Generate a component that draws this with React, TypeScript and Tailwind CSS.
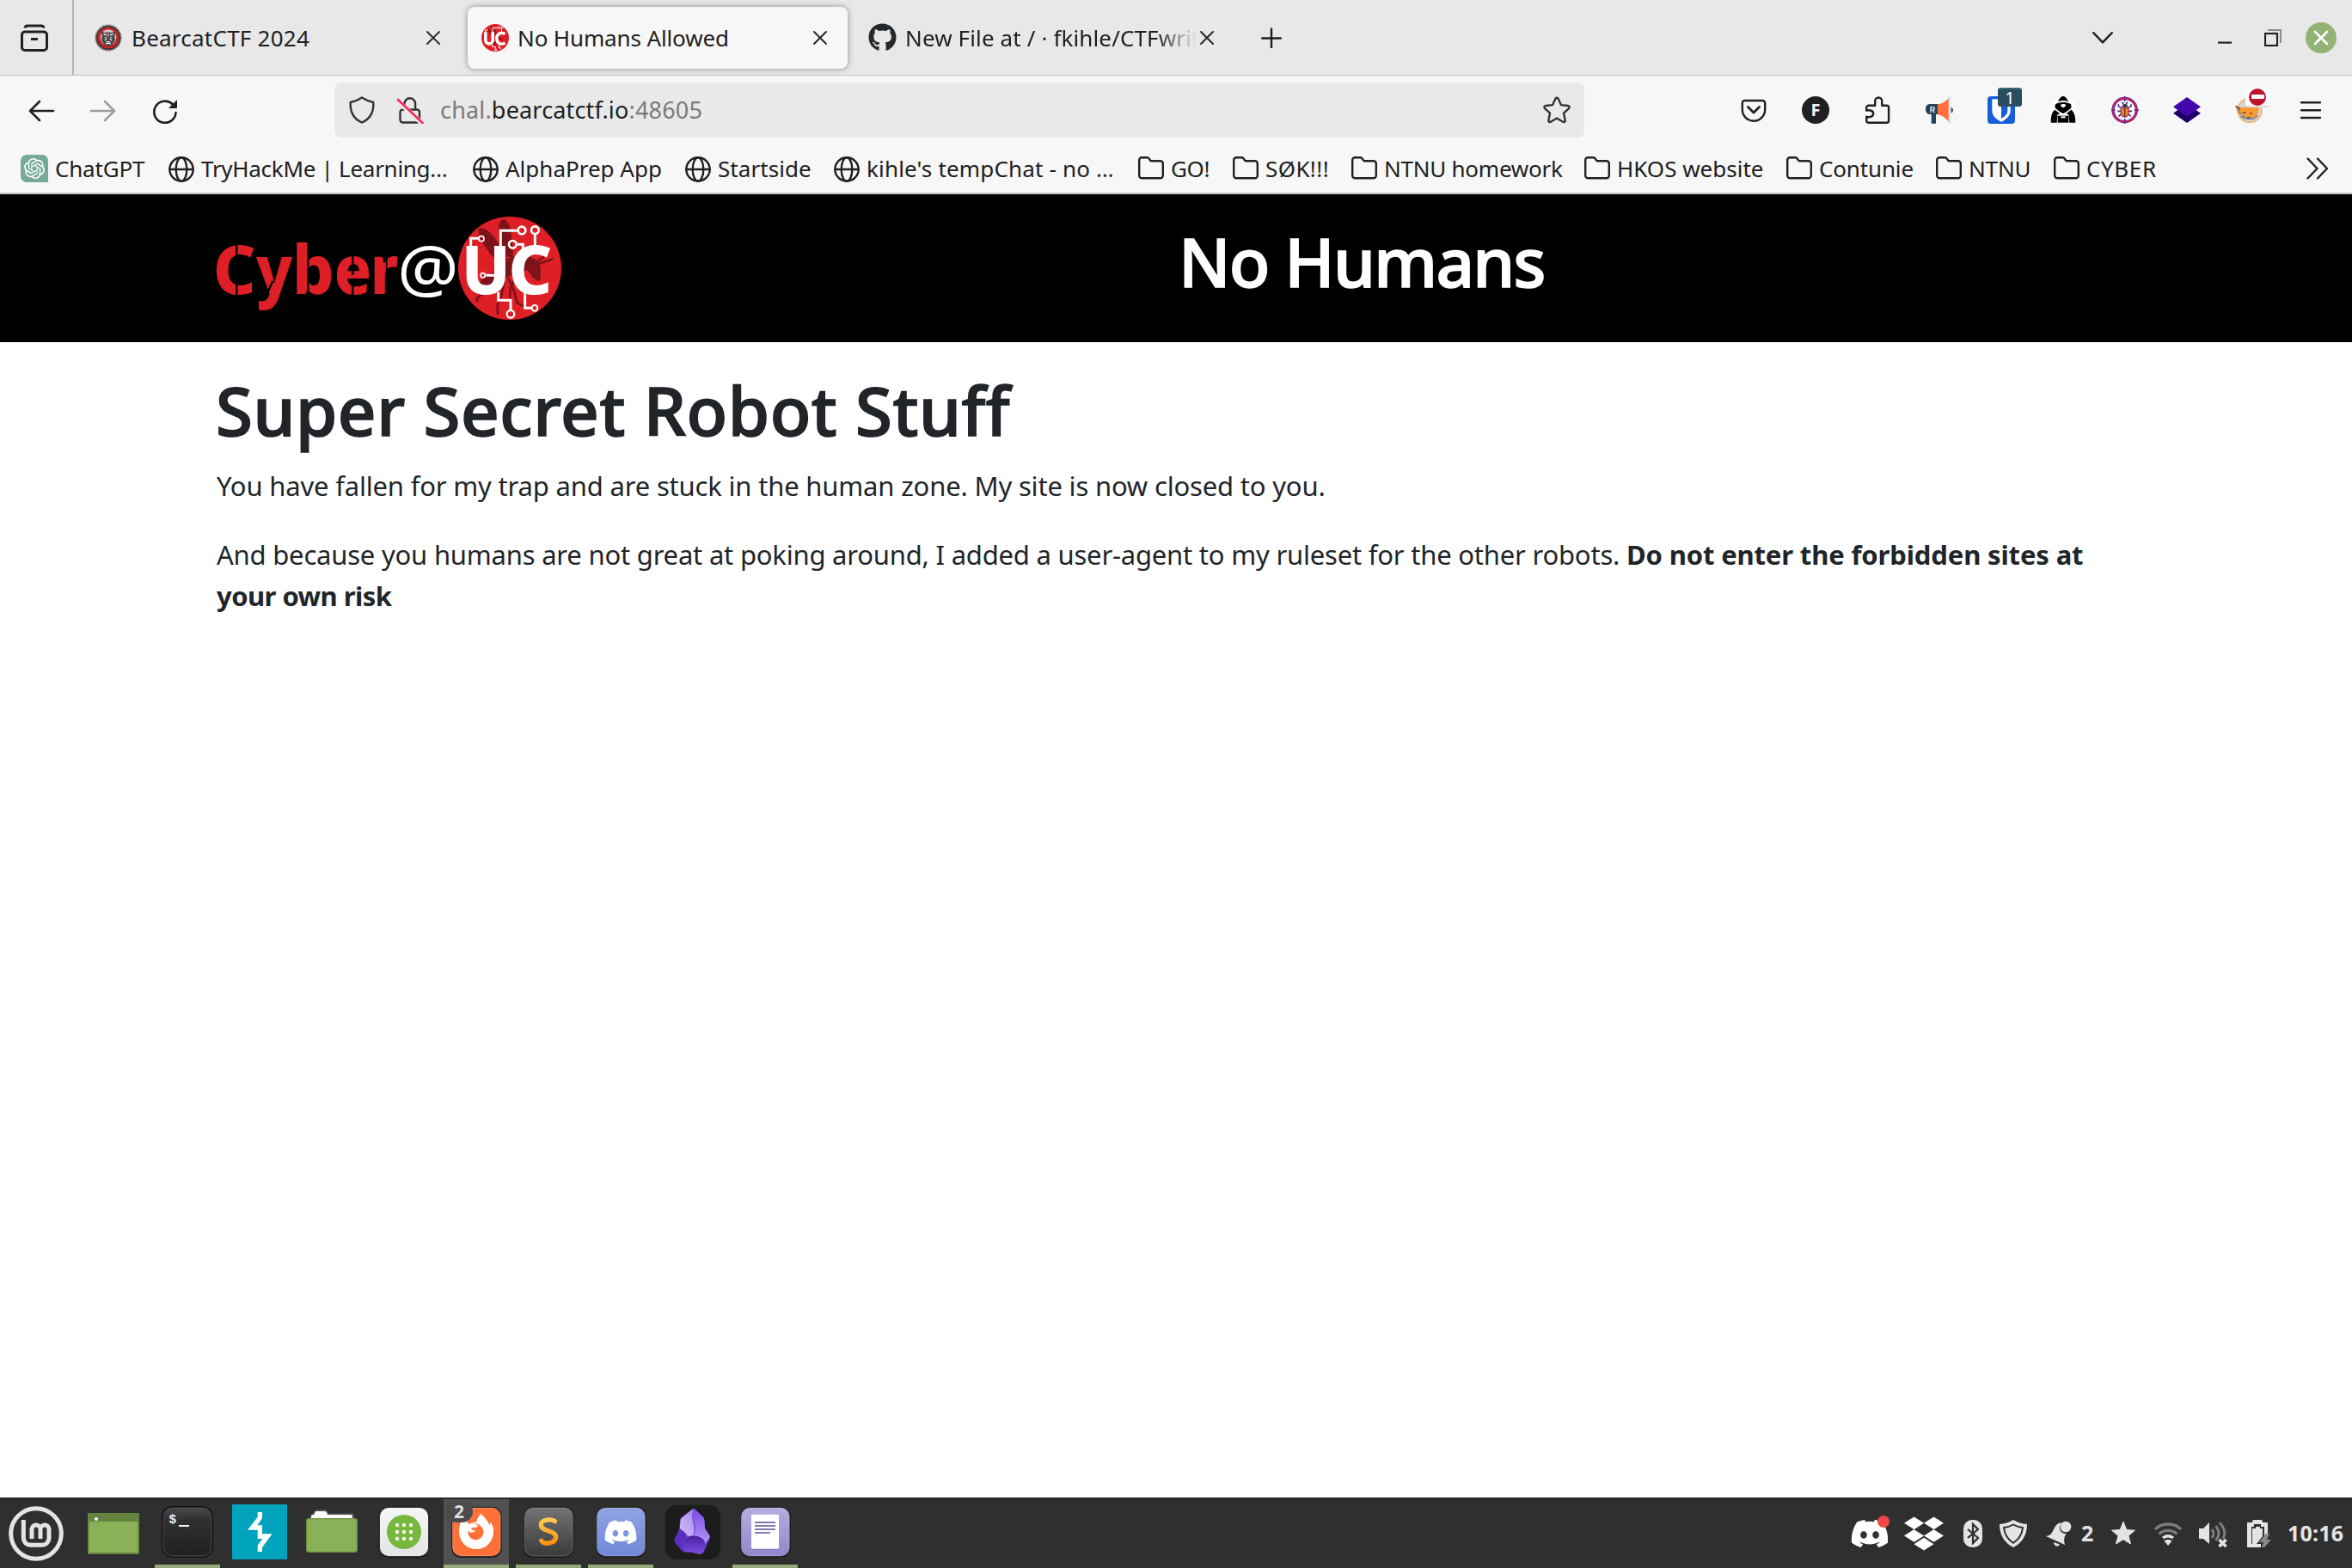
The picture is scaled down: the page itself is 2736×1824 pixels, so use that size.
import React, { ReactNode } from 'react';
import { FaDiscord, FaDropbox, FaGithub } from 'react-icons/fa';
import { SiOpenai } from 'react-icons/si';

/* ---------- browser chrome icons ---------- */

const Line = ({ children, className = 'size-8' }: { children: ReactNode; className?: string }) => (
  <svg viewBox="0 0 32 32" className={`shrink-0 ${className}`} fill="none" stroke="currentColor" strokeWidth="2.4" strokeLinecap="round" strokeLinejoin="round">
    {children}
  </svg>
);

const CloseIcon = () => (
  <svg viewBox="0 0 16 16" className="size-4 shrink-0" stroke="#222" strokeWidth="1.8" strokeLinecap="round">
    <path d="M1 1l14 14M15 1L1 15" />
  </svg>
);

const Globe = () => (
  <Line>
    <circle cx="16" cy="17" r="13.7" />
    <ellipse cx="16" cy="17" rx="6.3" ry="13.7" />
    <path d="M2.5 17h27" />
  </Line>
);

const Folder = () => (
  <Line>
    <path d="M2.2 6.2a3 3 0 0 1 3-3h6.2c1 0 1.7.4 2.2 1.2l1.6 2.3c.3.4.7.6 1.2.6h10.4a3 3 0 0 1 3 3v13.9a3 3 0 0 1-3 3H5.2a3 3 0 0 1-3-3z" />
  </Line>
);

const ChatGpt = () => (
  <span className="flex size-8 shrink-0 items-center justify-center rounded-[7px] rounded-br-none bg-[#74a99b]">
    <SiOpenai className="size-6 text-white" />
  </span>
);

const Bearcat = () => (
  <svg viewBox="0 0 32 32" className="size-8 shrink-0">
    <circle cx="16" cy="16" r="14.6" fill="#3a3536" stroke="#6f6a6b" strokeWidth="2" strokeDasharray="1.6 1.2" />
    <circle cx="16" cy="16" r="11.6" fill="#b5262b" stroke="#e01f26" strokeWidth="1.4" />
    <circle cx="16" cy="15.6" r="9.4" fill="#d9c3c4" />
    <path d="M8 8.5l4 1.6 4-.8 4 .8 4-1.6-.6 6 .6 4-3 5-5 3-5-3-3-5 .6-4z" fill="#4a4748" />
    <path d="M10.5 11.5l3.5 1.5M21.5 11.5L18 13M12 19l2-2M20 19l-2-2M13 22.5h6M14 20.6h4" stroke="#e8e5e5" strokeWidth="1.4" />
    <path d="M11.5 15.6h2.6M17.9 15.6h2.6M16 10v5" stroke="#b9b5b6" strokeWidth="1.2" />
  </svg>
);

const UcFavicon = () => (
  <svg viewBox="0 0 32 32" className="size-8 shrink-0">
    <circle cx="16" cy="16" r="16" fill="#df1f26" />
    <path d="M12 3l6 10 6 6M14 24l5-6M8 6l6 9" stroke="#8a151b" strokeWidth="2.4" />
    <g fill="none" stroke="#fff">
      <path d="M4.8 9.3v9.5a4.2 4.2 0 0 0 8.4 0V9.3" strokeWidth="3.6" />
      <path d="M27.5 11.6c-5.5-3-9.7.2-9.7 5.2s4.2 8 9.7 5.2" strokeWidth="3.4" />
      <path d="M4.5 9V7h3M13 9V4.5h5M23.5 10V5M12.5 24v2.5h4v3M20.5 24v4h3" strokeWidth="1" />
      <circle cx="20" cy="4.3" r="1.2" strokeWidth=".9" />
      <circle cx="23.7" cy="4" r="1.2" strokeWidth=".9" />
      <circle cx="16.5" cy="30" r="1.1" strokeWidth=".9" />
    </g>
  </svg>
);

/* ---------- tab strip ---------- */

const TabStrip = () => (
  <div className="flex h-[88px] items-center border-b border-[#c2c2c2] bg-[#e8e8e8] text-[26px]">
    <div className="flex h-[87px] w-[86px] shrink-0 items-center border-r-2 border-[#b5b5b5] pl-6">
      <svg viewBox="0 0 32 32" className="size-8" fill="none" stroke="#202022" strokeWidth="3">
        <rect x="1.5" y="9" width="29" height="21.5" rx="3.5" />
        <path d="M5 4.5C5.3 2.700 6.3 2 8 2h16c1.700 0 2.700.7 3 2.500" />
        <path d="M12 17.5h8" />
      </svg>
    </div>
    <div className="flex h-[72px] w-[458px] items-center pl-6 pr-8">
      <Bearcat />
      <span className="ml-[11px] grow whitespace-nowrap pt-px tracking-[0.24px]">BearcatCTF 2024</span>
      <CloseIcon />
    </div>
    <div className="flex h-[72px] w-[442px] items-center rounded-lg bg-[#f7f7f7] pl-4 pr-6 shadow-[0_0_7px_rgba(0,0,0,0.4)]">
      <UcFavicon />
      <span className="ml-2.5 grow whitespace-nowrap pt-px tracking-[-0.13px]">No Humans Allowed</span>
      <CloseIcon />
    </div>
    <div className="flex h-[72px] w-[450px] items-center pl-6 pr-6">
      <FaGithub className="size-[33px] shrink-0 text-[#24292e]" />
      <span className="ml-2.5 mr-1 w-0 grow overflow-hidden whitespace-nowrap pt-px tracking-[0.13px] [mask-image:linear-gradient(to_right,#000_86%,transparent_100%)]">
        New File at / · fkihle/CTFwrit
      </span>
      <CloseIcon />
    </div>
    <svg viewBox="0 0 24 24" className="ml-[31px] size-6" stroke="#202022" strokeWidth="2.4" strokeLinecap="round">
      <path d="M12 1.5v22M1 12.500h22" />
    </svg>
    <svg viewBox="0 0 24 14" className="ml-auto h-3.5 w-6" fill="none" stroke="#202022" strokeWidth="2.4" strokeLinecap="round" strokeLinejoin="round">
      <path d="M1.200 1.200L12 12.400 22.800 1.200" />
    </svg>
    <svg viewBox="0 0 16 16" className="ml-[122px] size-4">
      <path d="M0 12.500h16v2.200H0z" fill="#222" />
    </svg>
    <svg viewBox="0 0 20 20" className="ml-[38px] size-5" fill="none">
      <path d="M4 1h15v15" stroke="#8b8b8b" strokeWidth="2" />
      <rect x="1" y="5" width="14" height="14" stroke="#222" strokeWidth="2.2" />
    </svg>
    <svg viewBox="0 0 36 36" className="ml-7 mr-[18px] size-9">
      <circle cx="18" cy="18" r="18" fill="#93b374" />
      <path d="M11 11l14 14M25 11L11 25" stroke="#fff" strokeWidth="2.6" strokeLinecap="round" />
    </svg>
  </div>
);

/* ---------- navigation bar ---------- */

const Cell = ({ children }: { children: ReactNode }) => (
  <div className="relative flex h-20 w-[72px] shrink-0 items-center justify-center">{children}</div>
);

const NavBar = () => (
  <div className="flex h-20 items-center bg-[#f7f7f7] pl-3 pr-3 text-[#202022]">
    <Cell>
      <Line><path d="M30 17H3M14 6L3 17l11 11" strokeWidth="2.6" /></Line>
    </Cell>
    <Cell>
      <Line className="size-8 text-[#9c9c9c]"><path d="M2 17h27M18 6l11 11-11 11" strokeWidth="2.6" /></Line>
    </Cell>
    <Cell>
      <Line>
        <path d="M28.500 19A12.600 12.600 0 1 1 24.500 9" strokeWidth="2.6" />
        <path d="M29.500 5.200v8.300h-8.300z" fill="currentColor" strokeWidth="1" />
      </Line>
    </Cell>
    <div className="ml-[161px] flex h-16 w-[1454px] shrink-0 items-center rounded-lg bg-[#e9e9e9] pl-4 pr-4 text-[27px] text-[#333]">
      <Line>
        <path d="M16 1.500c4.500 3 8.600 4.500 13.300 5.500.6 11-4 19.500-13.300 23.500C6.700 26.500 2.100 18 2.700 7 7.400 6 11.500 4.500 16 1.500z" />
      </Line>
      <Line className="ml-6 size-8">
        <rect x="4.5" y="15.5" width="22.5" height="15" rx="3" />
        <path d="M9.500 10V8.500a6.300 6.300 0 0 1 12.600 0V15" />
        <path d="M0 4l30.500 28" stroke="#e9e9e9" strokeWidth="5.5" />
        <path d="M2 4l28.500 27" stroke="#f62b56" strokeWidth="2.6" />
      </Line>
      <span className="ml-[19px] grow whitespace-nowrap pt-px tracking-[0.17px] text-[#7a7a7a]">
        chal.<span className="text-[#202022]">bearcatctf.io</span>:48605
      </span>
      <Line>
        <path d="M16 1.800c.8 0 1.400.4 1.700 1.100l3.200 7.200 8.100.9c1.600.2 2.200 2 1 3.100L24 19.600l1.700 8.300c.3 1.500-1.200 2.600-2.500 1.800L16 25.500l-7.200 4.200c-1.300.8-2.800-.3-2.500-1.800L8 19.600l-6-5.500c-1.200-1.100-.6-2.900 1-3.100l8.100-.9 3.200-7.200c.3-.7.900-1.100 1.700-1.100z" />
      </Line>
    </div>
    <div className="ml-auto flex">
      <Cell>
        <Line>
          <path d="M5.500 5h21a2.700 2.700 0 0 1 2.700 2.700v7.800a13.200 13.200 0 0 1-26.400 0V7.700A2.700 2.700 0 0 1 5.500 5z" />
          <path d="M9.500 12.500L16 19l6.500-6.500" strokeWidth="2.8" />
        </Line>
      </Cell>
      <Cell>
        <span className="flex size-8 items-center justify-center rounded-full bg-[#202022] font-['Open_Sans',sans-serif] text-[20px] font-bold text-[#f7f7f7]">F</span>
      </Cell>
      <Cell>
        <Line>
          <path d="M5.500 30.700a2.500 2.500 0 0 1-2.300-2.500v-4.400c2 .7 8 .7 8-3.600s-6-4.300-8-3.600v-3.400c0-1.400 1-2.400 2.400-2.400h7.600V5.500a4 4 0 0 1 8 0v5.300h5.500c1.400 0 2.400 1 2.400 2.400v15c0 1.400-1 2.500-2.400 2.500z" />
        </Line>
      </Cell>
      <Cell>
        <svg viewBox="90 66 96 96" className="size-8">
          <path d="M103 93h30v36h-7v32h-16v-32h-7c-18-2-18-34 0-36z" fill="#264457" />
          <path d="M132 94c14-2 29-9 39-23v85c-10-14-25-24-39-26z" fill="#ff7038" />
          <path d="M170 67h5l3 3v88l-3 4h-5z" fill="#cfe3f1" />
          <path d="M179 105c9 1 9 19 0 19z" fill="#264457" />
          <path d="M108 123V104h8c7 0 7 10 0 10h-8m7 0l6 9" fill="none" stroke="#c9d6de" strokeWidth="4.5" />
        </svg>
      </Cell>
      <Cell>
        <svg viewBox="306 66 96 96" className="size-8">
          <rect x="306" y="66" width="96" height="96" rx="12" fill="#175ddc" />
          <path d="M322 76h64v40c0 20-18 32-32 39-14-7-32-19-32-39z" fill="#fff" />
          <path d="M354 84h22v33c0 12-11 20-22 27z" fill="#175ddc" />
        </svg>
        <span className="absolute left-8 top-[14px] flex h-[22px] w-7 items-center justify-center rounded-[3px] border-t-2 border-[#3f6776] bg-[#2a4e5e] text-[20px] leading-none text-white">1</span>
      </Cell>
      <Cell>
        <svg viewBox="522 66 96 96" className="size-8">
          <circle cx="570" cy="114" r="48" fill="#fff" />
          <path d="M552 84c4-10 11-18 18-18s14 8 18 18c-12-4-24-4-36 0z" />
          <path d="M542 96c6-12 50-12 56 0v10c-6 8-18 16-28 20-10-4-22-12-28-20z" />
          <path d="M561 95c6-3 13-3 19 0-1 5-5 9-10 11-5-2-8-6-9-11z" fill="#fff" />
          <path d="M527 157c0-20 3-36 14-44l18 14-9 3-2 28h-18c-2 0-3 0-3-1zM613 157c0-20-4-36-15-44l-17 14 8 3 3 28h18c2 0 3 0 3-1z" />
          <path d="M551 134h38v24h-38z" />
          <path d="M562 136h16v6h-16z" fill="#fff" />
        </svg>
      </Cell>
      <Cell>
        <svg viewBox="738 66 96 96" className="size-8" fill="none">
          <circle cx="785" cy="114" r="41" stroke="#6d2a9a" strokeWidth="10" />
          <circle cx="785" cy="114" r="41" stroke="#e0243f" strokeWidth="4" />
          <path d="M785 66v18M785 144v18M738 114h14M818 114h16" stroke="#5a2394" strokeWidth="5" />
          <path d="M772 106l-9-6v-6M798 106l9-6v-6M772 118h-12M798 118h12M772 128l-8 8M798 128l8 8M780 93l-4-7M790 93l4-7" stroke="#5a2394" strokeWidth="5" />
          <path d="M775 104c0-16 21-16 21 0z" fill="#3a3550" />
          <path d="M772 107h26v16c0 20-26 20-26 0z" fill="#f28a1c" stroke="#a2303c" strokeWidth="4" />
          <path d="M785 107v30" stroke="#5b2140" strokeWidth="4" />
        </svg>
      </Cell>
      <Cell>
        <svg viewBox="954 66 96 96" className="size-8">
          <path d="M1002 92l48 33-48 34-48-34z" fill="#1d0068" />
          <path d="M1002 69l48 34-48 34-48-34z" fill="#4305ad" />
        </svg>
      </Cell>
      <Cell>
        <svg viewBox="1170 66 96 96" className="size-8">
          <circle cx="1221" cy="115" r="42" fill="#d5d5d8" stroke="#fba950" strokeWidth="4" />
          <path d="M1186 136c14 16 50 20 66-2l-20-8z" fill="#8d8f95" />
          <path d="M1171 99l23 7 30-6 30 4-4 22-14 16-14-6-14 6-14-6-16-14z" fill="#fb9a35" />
          <path d="M1171 99l14 8-2 11zM1184 124l14 4 4 12z" fill="#fff" stroke="#444" strokeWidth="2" />
          <path d="M1176 103l12 9M1198 121l9 3M1222 127l8-3M1212 140h8" stroke="#3b3b3b" strokeWidth="3.5" />
        </svg>
        <span className="absolute left-8 top-[14px] flex h-[23px] w-7 items-center justify-center rounded-[3px] border-b-2 border-[#dcdcdc] bg-white">
          <span className="flex size-5 items-center justify-center rounded-full bg-[#bd152c]">
            <span className="h-[5px] w-[15px] rounded-[1px] bg-white" />
          </span>
        </span>
      </Cell>
      <Cell>
        <Line><path d="M5 7.200h22M5 16.200h22M5 25h22" /></Line>
      </Cell>
    </div>
  </div>
);

/* ---------- bookmarks ---------- */

const bookmarks: { label: string; icon: ReactNode; cls: string }[] = [
  { label: 'ChatGPT', icon: <ChatGpt />, cls: 'w-[171px] gap-2 tracking-[-0.2px]' },
  { label: 'TryHackMe | Learning…', icon: <Globe />, cls: 'w-[354px] gap-[7px] tracking-[-0.28px]' },
  { label: 'AlphaPrep App', icon: <Globe />, cls: 'w-[247px] gap-[7px]' },
  { label: 'Startside', icon: <Globe />, cls: 'w-[173px] gap-[7px] tracking-[0.06px]' },
  { label: "kihle's tempChat - no …", icon: <Globe />, cls: 'w-[354px] gap-[7px] tracking-[0.17px]' },
  { label: 'GO!', icon: <Folder />, cls: 'w-[110px] gap-[7px] tracking-[-0.4px]' },
  { label: 'SØK!!!', icon: <Folder />, cls: 'w-[138px] gap-[7px] tracking-[0.4px]' },
  { label: 'NTNU homework', icon: <Folder />, cls: 'w-[271px] gap-[7px] tracking-[-0.24px]' },
  { label: 'HKOS website', icon: <Folder />, cls: 'w-[235px] gap-[7px]' },
  { label: 'Contunie', icon: <Folder />, cls: 'w-[174px] gap-[7px] tracking-[-0.15px]' },
  { label: 'NTNU', icon: <Folder />, cls: 'w-[137px] gap-[7px] tracking-[-0.16px]' },
  { label: 'CYBER', icon: <Folder />, cls: 'w-[140px] gap-[7px] tracking-[0.6px]' },
];

const Bookmarks = () => (
  <div className="flex h-[58px] items-center border-b-2 border-[#c6c6c8] bg-[#f7f7f7] pl-6 text-[26px] text-[#202022]">
    {bookmarks.map((b, i) => (
      <div key={i} className={`flex shrink-0 items-center whitespace-nowrap ${b.cls}`}>
        {b.icon}
        <span>{b.label}</span>
      </div>
    ))}
    <svg viewBox="0 0 26 26" className="ml-auto mr-[27px] size-[26px]" fill="none" stroke="currentColor" strokeWidth="2.4" strokeLinecap="round" strokeLinejoin="round">
      <path d="M1.500 1.500L12.500 13l-11 11.500M13 1.500L24 13 13 24.500" />
    </svg>
  </div>
);

/* ---------- page ---------- */

const Logo = () => (
  <svg viewBox="0 0 1380 504" className="h-[168px] w-[460px]" fontFamily="'Noto Sans', sans-serif">
    <g fill="#df1f26" fontWeight="800" fontSize="237">
      <text x="53" y="336" textLength="150" lengthAdjust="spacingAndGlyphs">C</text>
      <text x="204" y="336" textLength="127" lengthAdjust="spacingAndGlyphs">y</text>
      <text x="330" y="336" textLength="146" lengthAdjust="spacingAndGlyphs">b</text>
      <text x="476" y="336" textLength="130" lengthAdjust="spacingAndGlyphs">e</text>
      <text x="602" y="336" textLength="98" lengthAdjust="spacingAndGlyphs">r</text>
    </g>
    <path d="M136 160v190M541 200v70M541 290v60M385 150v190M262 290l-20 46" stroke="#000" strokeWidth="7" />
    <path d="M659 200v140" stroke="#000" strokeWidth="5" />
    <text x="697" y="326" fill="#fff" fontSize="222" textLength="214" lengthAdjust="spacingAndGlyphs">@</text>
    <circle cx="1089" cy="246" r="180" fill="#df1f26" />
    <g fill="#7d1318">
      <path d="M980 108c22-12 50 20 70 52l30 54-30 14c-30-30-74-84-70-120z" />
      <path d="M1052 92c8-26 28-18 36 8 8 30 14 70 12 110l-26-6c-14-40-26-80-22-112z" />
      <path d="M1080 214l56-20 44 22c18 10 20 46 14 76-20-2-36-26-42-40l-30 10-34 10-26 20c-20 20-60 24-78 8 10-30 50-40 74-50z" />
    </g>
    <g fill="none" stroke="#7d1318" strokeWidth="8">
      <path d="M1180 226l28-20M1190 230l50-16M1084 280l20 46 10 40 26 14M1070 290l-12 60c-14 20-14 36-10 58M1000 330l-24 20-2 14M1104 290l-14 30v40" />
    </g>
    <g fill="none" stroke="#fff" strokeWidth="9">
      <path d="M953 180v-38h28M1057 180v-65h58M1177 128v50M1116 163h19v24M1006 271h40M1049 330v28h43v32M1142 325v60h22" />
      <circle cx="990" cy="143" r="9" strokeWidth="5" />
      <circle cx="1131" cy="114" r="13" strokeWidth="8" />
      <circle cx="1177" cy="113" r="13" strokeWidth="8" />
      <circle cx="1099" cy="163" r="13" strokeWidth="8" />
      <circle cx="995" cy="271" r="8" strokeWidth="5" />
      <circle cx="1092" cy="406" r="13" strokeWidth="7" />
      <circle cx="1176" cy="385" r="10" strokeWidth="6" />
    </g>
    <g fill="#fff" fontWeight="800" fontSize="234">
      <text x="920" y="336" textLength="171" lengthAdjust="spacingAndGlyphs">U</text>
      <text x="1084" y="336" textLength="154" lengthAdjust="spacingAndGlyphs">C</text>
    </g>
  </svg>
);

const Page = () => (
  <main className="flex grow flex-col bg-white text-[#212529]">
    <header className="flex h-[172px] items-start bg-black pl-[230px] text-white">
      <div className="w-[1141px] pt-1">
        <Logo />
      </div>
      <h1 className="whitespace-nowrap pt-[30px] text-[78px] font-medium leading-[96px] tracking-[-1.7px] [-webkit-text-stroke:1.6px_#fff]">No Humans</h1>
    </header>
    <section className="pl-[252px] pt-8 text-[31px] leading-[48px]">
      <h2 className="-ml-px -mt-px mb-4 text-[78px] font-medium leading-[96px] tracking-[0.55px] [-webkit-text-stroke:1.6px_#212529]">Super Secret Robot Stuff</h2>
      <p className="mb-8 whitespace-nowrap tracking-[-0.18px]">
        You have fallen for my trap and are stuck in the human zone. My site is now closed to you.
      </p>
      <p className="whitespace-nowrap">
        <span className="tracking-[-0.21px]">
          And because you humans are not great at poking around, I added a user-agent to my ruleset for the other robots.{' '}
        </span>
        <b className="font-bold tracking-[-0.14px]">Do not enter the forbidden sites at</b>
        <br />
        <b className="font-bold tracking-[-0.55px]">your own risk</b>
      </p>
    </section>
  </main>
);

/* ---------- desktop panel ---------- */

const App64 = ({ box, children }: { box: string; children: ReactNode }) => (
  <svg viewBox={box} className="size-16 overflow-visible">
    {children}
  </svg>
);

const Task = ({ open, active, children }: { open?: boolean; active?: boolean; children: ReactNode }) => (
  <div className={`relative flex h-20 w-[76px] shrink-0 flex-col items-center pt-1.5 ${active ? 'bg-[#515151]' : ''} ${open ? 'border-b-4 border-[#93a977]' : ''}`}>
    {children}
  </div>
);

const Tile = ({ x, y = 70, fill }: { x: number; y?: number; fill: string }) => (
  <>
    <rect x={x - 2} y={y - 2} width="176" height="178" rx="34" fill="#191919" />
    <rect x={x + 2} y={y + 2} width="168" height="168" rx="30" fill={fill} stroke="#fff" strokeOpacity=".18" strokeWidth="4" />
  </>
);

const Taskbar = () => (
  <footer className="flex h-[82px] shrink-0 items-center border-t-2 border-[#262626] bg-[#2f2f2f] text-[#e4e4e4]">
    <svg width="0" height="0" className="absolute">
      <defs>
        <linearGradient id="term" x2="0" y2="1"><stop stopColor="#4a4a4a" /><stop offset=".25" stopColor="#303030" /><stop offset="1" stopColor="#202020" /></linearGradient>
        <linearGradient id="subl" x2="0" y2="1"><stop stopColor="#737373" /><stop offset="1" stopColor="#3a3a3a" /></linearGradient>
        <linearGradient id="sublS" gradientUnits="userSpaceOnUse" x1="470" x2="470" y1="105" y2="205"><stop stopColor="#ffd055" /><stop offset="1" stopColor="#ff8c0a" /></linearGradient>
        <linearGradient id="disc" x2="0" y2="1"><stop stopColor="#90a3e2" /><stop offset="1" stopColor="#6f88d8" /></linearGradient>
        <linearGradient id="note" x2="0" y2="1"><stop stopColor="#b3aee0" /><stop offset="1" stopColor="#8f88cc" /></linearGradient>
        <linearGradient id="menu" x2="0" y2="1"><stop stopColor="#f6f6f6" /><stop offset="1" stopColor="#e4e4e4" /></linearGradient>
        <linearGradient id="obsL" x1="1" x2="0" y2="1"><stop stopColor="#a887f0" /><stop offset="1" stopColor="#d3c1f8" /></linearGradient>
        <linearGradient id="obsR" x2="0" y2="1"><stop stopColor="#7f4be8" /><stop offset="1" stopColor="#b495f5" /></linearGradient>
        <linearGradient id="obsB" x2="0" y2="1"><stop stopColor="#4a20a4" /><stop offset="1" stopColor="#7c4fdc" /></linearGradient>
      </defs>
    </svg>
    <div className="flex w-[84px] justify-center">
      <App64 box="30 66 192 192">
        <g fill="none" stroke="#e4e4e4" strokeWidth="15">
          <circle cx="126" cy="162" r="88" />
          <path d="M82 114v64a24 24 0 0 0 24 24h41a24 24 0 0 0 24-24v-31a15 15 0 0 0-30 0v33M141 147a15 15 0 0 0-30 0v33" />
        </g>
      </App64>
    </div>
    <div className="flex w-24 justify-center">
      <App64 box="300 66 192 192">
        <rect x="306" y="90" width="180" height="144" rx="4" fill="#64843f" />
        <rect x="311" y="120" width="170" height="108" fill="#8bb158" />
        <circle cx="336" cy="111" r="6" fill="#fff" />
      </App64>
    </div>
    <div className="flex h-20 gap-2">
      <Task open>
        <App64 box="558 60 192 192">
          <rect x="564" y="66" width="180" height="180" rx="38" fill="#0d0d0d" />
          <rect x="570" y="72" width="168" height="168" rx="32" fill="url(#term)" stroke="#444" strokeWidth="4" />
          <text x="589" y="125" fontFamily="'Liberation Mono', monospace" fontSize="45" fontWeight="700" fill="#eee">$</text>
          <path d="M624 132h36v6h-36z" fill="#f2f2f2" />
        </App64>
      </Task>
      <Task>
        <App64 box="810 60 192 192">
          <rect x="810" y="60" width="192" height="192" fill="#02a3bd" />
          <path d="M899 87h16v22l-17 24h17v30h35l-35 47v15h-16v-22l17-23h-17v-31h-35l35-45z" fill="#fff" />
        </App64>
      </Task>
      <Task>
        <App64 box="1062 60 192 192">
          <path d="M1082 112V98q2-6 12-8l4-8q3-4 8-4h30q6 0 8 6l4 6h78q8 0 10 6v16z" fill="#4d4d4d" />
          <path d="M1086 112v-10q0-6 8-6h2l3-8q1-4 6-4h28q6 0 8 6l2 6h81q6 0 6 6v10z" fill="#fff" />
          <rect x="1070" y="110" width="176" height="116" rx="8" fill="#8bb158" stroke="#6f9145" strokeWidth="4" />
        </App64>
      </Task>
      <Task>
        <App64 box="1314 60 192 192">
          <Tile x={1324} fill="url(#menu)" />
          <circle cx="1410" cy="156" r="60" fill="#76b83d" />
          {[126, 150, 174].map((y) => [1380, 1404, 1428].map((x) => <rect key={`${x}-${y}`} x={x} y={y} width="12" height="12" rx="2" fill="#f4f8ef" />))}
        </App64>
      </Task>
      <Task open active>
        <App64 box="126 60 192 192">
          <Tile x={137} fill="#ff7139" />
          <path d="M180 102C166 118 161 138 162 158c2 34 28 58 60 58s58-24 60-58c1-18-4-28-11-36 0 6-1 8-3 10-5-16-18-26-29-40-8 8-15 18-17 30-12 0-20 4-24 7-8-4-14-14-18-27z" fill="#fff" />
          <path d="M193 150c2 6 8 9 14 8 6-1 9-5 14-6-6-2-14 0-17-6 8-8 24-4 24-10-2-8-14-12-24-8 20-8 44 8 43 30-1 16-14 26-28 26-16 0-28-16-26-34z" fill="#ff7139" />
        </App64>
        <span className="absolute left-0.5 top-0.5 flex h-[25px] w-8 items-center justify-center rounded-full bg-[#4b4b4b] text-[21px] font-bold leading-none text-[#dedede]">2</span>
      </Task>
      <Task open>
        <App64 box="378 60 192 192">
          <Tile x={389} fill="url(#subl)" />
          <path d="M496 119c-8-8-48-8-48 12 0 26 52 18 52 42 0 22-38 30-51 14" fill="none" stroke="url(#sublS)" strokeWidth="16" strokeLinecap="round" />
        </App64>
      </Task>
      <Task open>
        <App64 box="630 60 192 192">
          <Tile x={641} fill="url(#disc)" />
          <FaDiscord x={666} y={97} size={120} color="#fff" />
        </App64>
      </Task>
      <Task>
        <App64 box="882 60 192 192">
          <rect x="882" y="62" width="192" height="190" rx="38" fill="#1c1c1c" />
          <path d="M978 76q4-2 8 2l28 26q4 4 4 12l2 28 16 24q3 5 0 12l-20 46q-4 8-12 8l-28-6-28-4q-6-1-10-6l-22-28q-4-4-1-10l16-32 2-34q1-6 6-10z" fill="#6a3fcf" />
          <path d="M978 76l-37 30q-6 4-6 10l-3 30q16 4 32 30 8-4 16-6 6-30-2-50-4-20 0-44z" fill="url(#obsL)" />
          <path d="M978 76q4-2 8 2l28 26q4 4 4 12l2 28 16 24q2 6-2 12l-14 18q-4-24-38-28 8-30 0-50-6-20-4-44z" fill="url(#obsR)" />
          <path d="M932 144q26 16 26 50l-12 32-8-6-22-26q-3-4-1-8z" fill="#5c2fc4" />
          <path d="M946 226q-2-40 20-56 34-4 50 14 6 10 4 16l-8 26q-2 8-12 7l-26-6z" fill="url(#obsB)" />
        </App64>
      </Task>
      <Task open>
        <App64 box="1134 60 192 192">
          <Tile x={1145} fill="url(#note)" />
          <rect x="1182" y="98" width="96" height="120" rx="4" fill="#7d77b4" />
          <rect x="1182" y="95" width="96" height="120" rx="4" fill="#fff" />
          <path d="M1194 123h72M1194 135h72M1194 147h72M1194 159h54" stroke="#7f79b5" strokeWidth="6" />
        </App64>
      </Task>
    </div>

    <div className="ml-auto flex h-20 items-center pb-px pr-[9px]">
      <span className="relative">
        <FaDiscord className="size-[46px] text-white" />
        <span className="absolute right-0 top-0.5 size-3.5 rounded-full bg-[#f04747]" />
      </span>
      <FaDropbox className="ml-[17px] size-[46px] text-white" />
      <svg viewBox="0 0 32 32" className="ml-[18px] size-8">
        <rect x="5" y="0" width="22" height="32" rx="10" fill="#e4e4e4" />
        <path d="M10 11l12 10-6 6V5l6 6-12 10" fill="none" stroke="#2f2f2f" strokeWidth="2.2" />
      </svg>
      <svg viewBox="0 0 32 32" className="ml-[15px] size-8">
        <path d="M16 0c5 3 10 4.500 16 5 0 13-6 22-16 27C6 27 0 18 0 5c6-.5 11-2 16-5z" fill="#e4e4e4" />
        <path d="M16 5.500c3.500 2 7 3 11 3.500-.8 8-4.500 13.800-11 17.800C9.500 22.800 5.800 17 5 9c4-.5 7.500-1.500 11-3.500z" fill="none" stroke="#2f2f2f" strokeWidth="2" />
      </svg>
      <svg viewBox="0 0 32 32" className="ml-[21px] size-8" fill="#e4e4e4">
        <path d="M1 19c6-1 7-4 10-10 2-4 5-6 8.500-5.500-5 4-2.500 13 5 12.500-2.500 4-3 8-1.500 13z" />
        <circle cx="24" cy="8" r="6.3" />
        <path d="M10 26l7 2.500c-2 4-7 2-7-2.500z" />
      </svg>
      <span className="ml-2.5 w-[15px] text-[25px] font-bold">2</span>
      <svg viewBox="0 0 32 32" className="ml-[18px] size-8" fill="#e4e4e4" stroke="#e4e4e4" strokeLinejoin="round">
        <path d="M16 2l3.800 9.600 9.700.6-7.500 6.300 2.500 9.500-8.500-5.300L7.500 28l2.500-9.500-7.500-6.300 9.700-.6z" />
      </svg>
      <svg viewBox="0 0 32 32" className="ml-5 size-8" fill="none" strokeWidth="3.4">
        <path d="M1 11c8-8 22-8 30 0M5.500 16.500c6-5.500 15-5.500 21 0" stroke="#7c7c7c" />
        <path d="M10 21c3.500-3 8.500-3 12 0" stroke="#e4e4e4" />
        <path d="M11.500 24.500c2.500-2 6.500-2 9 0L16 30z" fill="#e4e4e4" />
      </svg>
      <svg viewBox="0 0 34 32" className="ml-5 h-8 w-[34px]" fill="none">
        <path d="M0 10h5l7-7v25l-7-6H0z" fill="#e4e4e4" />
        <path d="M15 11q4 5 0 10M19.500 7q7 9 0 17M24 3q9 10 4 19" stroke="#7c7c7c" strokeWidth="3" />
        <path d="M23.500 23l8 8M31.500 23l-8 8" stroke="#e4e4e4" strokeWidth="3.6" />
      </svg>
      <svg viewBox="0 0 32 32" className="ml-5 size-8">
        <path d="M8 3V2q0-2 2-2h8q2 0 2 2v1h6v13l-4 4V8h-4V5h-8v3H7v20h11v4H2V3z" fill="#e4e4e4" />
        <path d="M8 10h4V8h5v2h3v9l-7 9H8z" fill="#e4e4e4" />
        <path d="M24 16l-8 10h5l-2 6h3l8-9h-5l3-7z" fill="#8a8a8a" />
      </svg>
      <span className="ml-[17px] w-[66px] whitespace-nowrap text-[25px] font-bold tracking-[0.2px]">10:16</span>
    </div>
  </footer>
);

export default function App() {
  return (
    <div className="flex h-[1824px] w-[2736px] flex-col overflow-hidden bg-white font-['Noto_Sans',sans-serif] text-[#202022]">
      <TabStrip />
      <NavBar />
      <Bookmarks />
      <Page />
      <Taskbar />
    </div>
  );
}
